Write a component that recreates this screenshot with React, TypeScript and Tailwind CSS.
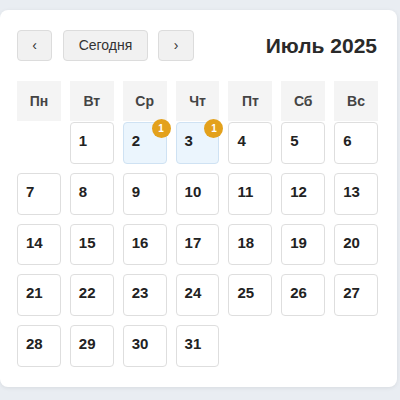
import React from 'react';

const weekDays = ['Пн', 'Вт', 'Ср', 'Чт', 'Пт', 'Сб', 'Вс'];

// July 2025 starts on Tuesday
const cells: (number | null)[] = [null, ...Array.from({ length: 31 }, (_, i) => i + 1)];
const events: Record<number, number> = { 2: 1, 3: 1 };

export default function App() {
    return (
        <div className="min-h-screen bg-[#e9edf2] pt-[10px] font-['Liberation_Sans',Arial,sans-serif]">
            <div className="w-[397px] h-[377px] bg-white rounded-lg shadow-[0_1px_4px_rgba(0,0,0,0.08)] pl-[17px] pr-[19px] pt-[20px]">
                {/* Toolbar */}
                <div className="flex items-center justify-between h-[31px]">
                    <div className="flex items-center">
                        <button className="w-[35px] h-[31px] bg-[#f1f1f1] border border-[#dcdcdc] rounded text-[14px] text-[#333]">
                            ‹
                        </button>
                        <button className="ml-[11px] w-[85px] h-[31px] bg-[#f1f1f1] border border-[#dcdcdc] rounded text-[14px] text-[#333]">
                            Сегодня
                        </button>
                        <button className="ml-[10px] w-[36px] h-[31px] bg-[#f1f1f1] border border-[#dcdcdc] rounded text-[14px] text-[#333]">
                            ›
                        </button>
                    </div>
                    <h2 className="text-[21px] font-bold text-[#2a2a2a] mr-[1px]">Июль 2025</h2>
                </div>

                {/* Weekday header */}
                <div className="grid grid-cols-7 gap-x-[9px] mt-[20px]">
                    {weekDays.map((d) => (
                        <div key={d} className="h-[40px] bg-[#f4f4f4] flex items-center justify-center text-[14px] font-bold text-[#444]">
                            {d}
                        </div>
                    ))}
                </div>

                {/* Days */}
                <div className="grid grid-cols-7 gap-x-[9px] gap-y-[9px] mt-[1px]">
                    {cells.map((day, i) =>
                        day === null ? (
                            <div key={`e${i}`} className="h-[41.75px]" />
                        ) : (
                            <div
                                key={day}
                                className={`relative h-[41.75px] rounded border pl-[8px] pt-[9px] text-[15px] leading-[18px] font-bold text-[#222] ${
                                    events[day] ? 'bg-[#ebf5fd] border-[#cfe2f3]' : 'bg-white border-[#dedede]'
                                }`}
                            >
                                {day}
                                {events[day] && (
                                    <span className="absolute -top-[4px] -right-[5px] w-[19px] h-[19px] rounded-full bg-[#e3a11c] text-white text-[10px] font-bold flex items-center justify-center">
                                        {events[day]}
                                    </span>
                                )}
                            </div>
                        )
                    )}
                </div>
            </div>
        </div>
    );
}
